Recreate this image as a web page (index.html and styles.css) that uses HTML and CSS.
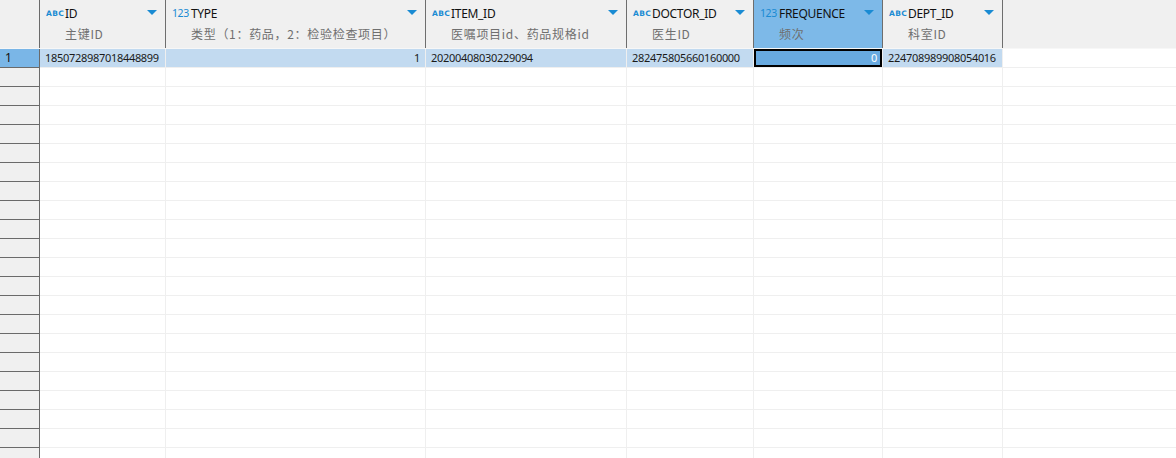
FILE: index.html
```html
<!DOCTYPE html>
<html>
<head>
<meta charset="utf-8">
<link rel="stylesheet" href="styles.css">
</head>
<body>
<div class="grid">
  <div class="row header">
    <div class="gut gut-h"></div>
    <div class="hcell c1">
      <div class="hline"><span class="ic abc">ABC</span><span class="name">ID</span><svg class="tri" width="10" height="5" viewBox="0 0 10 5"><polygon points="0,0 10,0 5,5"/></svg></div>
      <div class="sub">主键ID</div>
    </div>
    <div class="hcell c2">
      <div class="hline"><span class="ic num">123</span><span class="name">TYPE</span><svg class="tri" width="10" height="5" viewBox="0 0 10 5"><polygon points="0,0 10,0 5,5"/></svg></div>
      <div class="sub">类型（1：药品，2：检验检查项目）</div>
    </div>
    <div class="hcell c3">
      <div class="hline"><span class="ic abc">ABC</span><span class="name">ITEM_ID</span><svg class="tri" width="10" height="5" viewBox="0 0 10 5"><polygon points="0,0 10,0 5,5"/></svg></div>
      <div class="sub">医嘱项目id、药品规格id</div>
    </div>
    <div class="hcell c4">
      <div class="hline"><span class="ic abc">ABC</span><span class="name">DOCTOR_ID</span><svg class="tri" width="10" height="5" viewBox="0 0 10 5"><polygon points="0,0 10,0 5,5"/></svg></div>
      <div class="sub">医生ID</div>
    </div>
    <div class="hcell c5 hsel">
      <div class="hline"><span class="ic num">123</span><span class="name">FREQUENCE</span><svg class="tri" width="10" height="5" viewBox="0 0 10 5"><polygon points="0,0 10,0 5,5"/></svg></div>
      <div class="sub">频次</div>
    </div>
    <div class="hcell c6">
      <div class="hline"><span class="ic abc">ABC</span><span class="name">DEPT_ID</span><svg class="tri" width="10" height="5" viewBox="0 0 10 5"><polygon points="0,0 10,0 5,5"/></svg></div>
      <div class="sub">科室ID</div>
    </div>
    <div class="hfill"></div>
  </div>

  <div class="row body sel">
    <div class="gut">1</div>
    <div class="cell c1">1850728987018448899</div>
    <div class="cell c2 right">1</div>
    <div class="cell c3">20200408030229094</div>
    <div class="cell c4">282475805660160000</div>
    <div class="cell c5 right focus">0</div>
    <div class="cell c6">224708989908054016</div>
    <div class="cell fill"></div>
  </div>
  <div class="row body"><div class="gut"></div><div class="cell c1"></div><div class="cell c2"></div><div class="cell c3"></div><div class="cell c4"></div><div class="cell c5"></div><div class="cell c6"></div><div class="cell fill"></div></div>
  <div class="row body"><div class="gut"></div><div class="cell c1"></div><div class="cell c2"></div><div class="cell c3"></div><div class="cell c4"></div><div class="cell c5"></div><div class="cell c6"></div><div class="cell fill"></div></div>
  <div class="row body"><div class="gut"></div><div class="cell c1"></div><div class="cell c2"></div><div class="cell c3"></div><div class="cell c4"></div><div class="cell c5"></div><div class="cell c6"></div><div class="cell fill"></div></div>
  <div class="row body"><div class="gut"></div><div class="cell c1"></div><div class="cell c2"></div><div class="cell c3"></div><div class="cell c4"></div><div class="cell c5"></div><div class="cell c6"></div><div class="cell fill"></div></div>
  <div class="row body"><div class="gut"></div><div class="cell c1"></div><div class="cell c2"></div><div class="cell c3"></div><div class="cell c4"></div><div class="cell c5"></div><div class="cell c6"></div><div class="cell fill"></div></div>
  <div class="row body"><div class="gut"></div><div class="cell c1"></div><div class="cell c2"></div><div class="cell c3"></div><div class="cell c4"></div><div class="cell c5"></div><div class="cell c6"></div><div class="cell fill"></div></div>
  <div class="row body"><div class="gut"></div><div class="cell c1"></div><div class="cell c2"></div><div class="cell c3"></div><div class="cell c4"></div><div class="cell c5"></div><div class="cell c6"></div><div class="cell fill"></div></div>
  <div class="row body"><div class="gut"></div><div class="cell c1"></div><div class="cell c2"></div><div class="cell c3"></div><div class="cell c4"></div><div class="cell c5"></div><div class="cell c6"></div><div class="cell fill"></div></div>
  <div class="row body"><div class="gut"></div><div class="cell c1"></div><div class="cell c2"></div><div class="cell c3"></div><div class="cell c4"></div><div class="cell c5"></div><div class="cell c6"></div><div class="cell fill"></div></div>
  <div class="row body"><div class="gut"></div><div class="cell c1"></div><div class="cell c2"></div><div class="cell c3"></div><div class="cell c4"></div><div class="cell c5"></div><div class="cell c6"></div><div class="cell fill"></div></div>
  <div class="row body"><div class="gut"></div><div class="cell c1"></div><div class="cell c2"></div><div class="cell c3"></div><div class="cell c4"></div><div class="cell c5"></div><div class="cell c6"></div><div class="cell fill"></div></div>
  <div class="row body"><div class="gut"></div><div class="cell c1"></div><div class="cell c2"></div><div class="cell c3"></div><div class="cell c4"></div><div class="cell c5"></div><div class="cell c6"></div><div class="cell fill"></div></div>
  <div class="row body"><div class="gut"></div><div class="cell c1"></div><div class="cell c2"></div><div class="cell c3"></div><div class="cell c4"></div><div class="cell c5"></div><div class="cell c6"></div><div class="cell fill"></div></div>
  <div class="row body"><div class="gut"></div><div class="cell c1"></div><div class="cell c2"></div><div class="cell c3"></div><div class="cell c4"></div><div class="cell c5"></div><div class="cell c6"></div><div class="cell fill"></div></div>
  <div class="row body"><div class="gut"></div><div class="cell c1"></div><div class="cell c2"></div><div class="cell c3"></div><div class="cell c4"></div><div class="cell c5"></div><div class="cell c6"></div><div class="cell fill"></div></div>
  <div class="row body"><div class="gut"></div><div class="cell c1"></div><div class="cell c2"></div><div class="cell c3"></div><div class="cell c4"></div><div class="cell c5"></div><div class="cell c6"></div><div class="cell fill"></div></div>
  <div class="row body"><div class="gut"></div><div class="cell c1"></div><div class="cell c2"></div><div class="cell c3"></div><div class="cell c4"></div><div class="cell c5"></div><div class="cell c6"></div><div class="cell fill"></div></div>
  <div class="row body"><div class="gut"></div><div class="cell c1"></div><div class="cell c2"></div><div class="cell c3"></div><div class="cell c4"></div><div class="cell c5"></div><div class="cell c6"></div><div class="cell fill"></div></div>
  <div class="row body"><div class="gut"></div><div class="cell c1"></div><div class="cell c2"></div><div class="cell c3"></div><div class="cell c4"></div><div class="cell c5"></div><div class="cell c6"></div><div class="cell fill"></div></div>
  <div class="row body"><div class="gut"></div><div class="cell c1"></div><div class="cell c2"></div><div class="cell c3"></div><div class="cell c4"></div><div class="cell c5"></div><div class="cell c6"></div><div class="cell fill"></div></div>
  <div class="row body"><div class="gut"></div><div class="cell c1"></div><div class="cell c2"></div><div class="cell c3"></div><div class="cell c4"></div><div class="cell c5"></div><div class="cell c6"></div><div class="cell fill"></div></div>
</div>
</body>
</html>
```

FILE: styles.css
```css
* { box-sizing: border-box; }
html, body {
  margin: 0;
  padding: 0;
  background: #ffffff;
  overflow: hidden;
}
body {
  font-family: "Noto Sans", "Noto Sans CJK SC", sans-serif;
  color: #1a1a1a;
  width: 1176px;
  height: 458px;
}
.grid {
  display: flex;
  flex-direction: column;
  width: 1176px;
}
.row {
  display: flex;
  flex-shrink: 0;
}
.header {
  height: 49px;
  background: #f0f0f0;
  border-bottom: 1px solid #f7f7f7;
}
.gut {
  width: 40px;
  flex-shrink: 0;
  background: #f0f0f0;
  border-right: 1px solid #6a6a6a;
  border-bottom: 1px solid #6a6a6a;
  font-size: 12px;
  line-height: 18px;
  padding-left: 5px;
  color: #111;
}
.gut-h {
  border-bottom: none;
}
.c1 { width: 126px; }
.c2 { width: 260px; }
.c3 { width: 201px; }
.c4 { width: 127px; }
.c5 { width: 129px; }
.c6 { width: 120px; }
.hcell, .cell { flex-shrink: 0; }
.hcell {
  border-right: 1px solid #6e6e6e;
  padding: 5px 8px 0 6px;
  display: flex;
  flex-direction: column;
}
.hsel { background: #7db9e8; }
.hfill { flex: 1; }
.hline {
  display: flex;
  align-items: center;
  height: 16px;
  white-space: nowrap;
}
.ic {
  width: 19px;
  flex-shrink: 0;
  color: #1a8bd3;
}
.abc {
  font-family: "DejaVu Sans", sans-serif;
  font-weight: bold;
  font-size: 7.5px;
  letter-spacing: 0.4px;
  padding-top: 1px;
}
.num {
  font-family: "Noto Sans", sans-serif;
  font-size: 10.5px;
  letter-spacing: -0.4px;
}
.name {
  font-size: 12px;
  color: #111;
  letter-spacing: -0.3px;
}
.tri {
  margin-left: auto;
  fill: #1a8bd3;
  margin-top: -1px;
}
.sub {
  margin-top: 5px;
  padding-left: 19px;
  font-family: "Noto Sans CJK SC", sans-serif;
  font-size: 12px;
  letter-spacing: 0.7px;
  line-height: 16px;
  color: #6f6f6f;
  white-space: nowrap;
}
.body { height: 19px; }
.cell {
  height: 19px;
  border-right: 1px solid #efefef;
  border-bottom: 1px solid #efefef;
  font-size: 11px;
  letter-spacing: -0.3px;
  line-height: 18px;
  padding: 0 5px;
  white-space: nowrap;
  overflow: hidden;
}
.cell.fill { flex: 1; border-right: none; }
.right { text-align: right; }
.sel .gut { background: #7ab6e7; }
.sel .cell { background: #c2daf0; }
.sel .cell.fill { background: #ffffff; }
.sel .cell.focus {
  background: #68aae0;
  box-shadow: inset 0 0 0 2px #000;
  color: #fff;
  padding-right: 5px;
}
```
